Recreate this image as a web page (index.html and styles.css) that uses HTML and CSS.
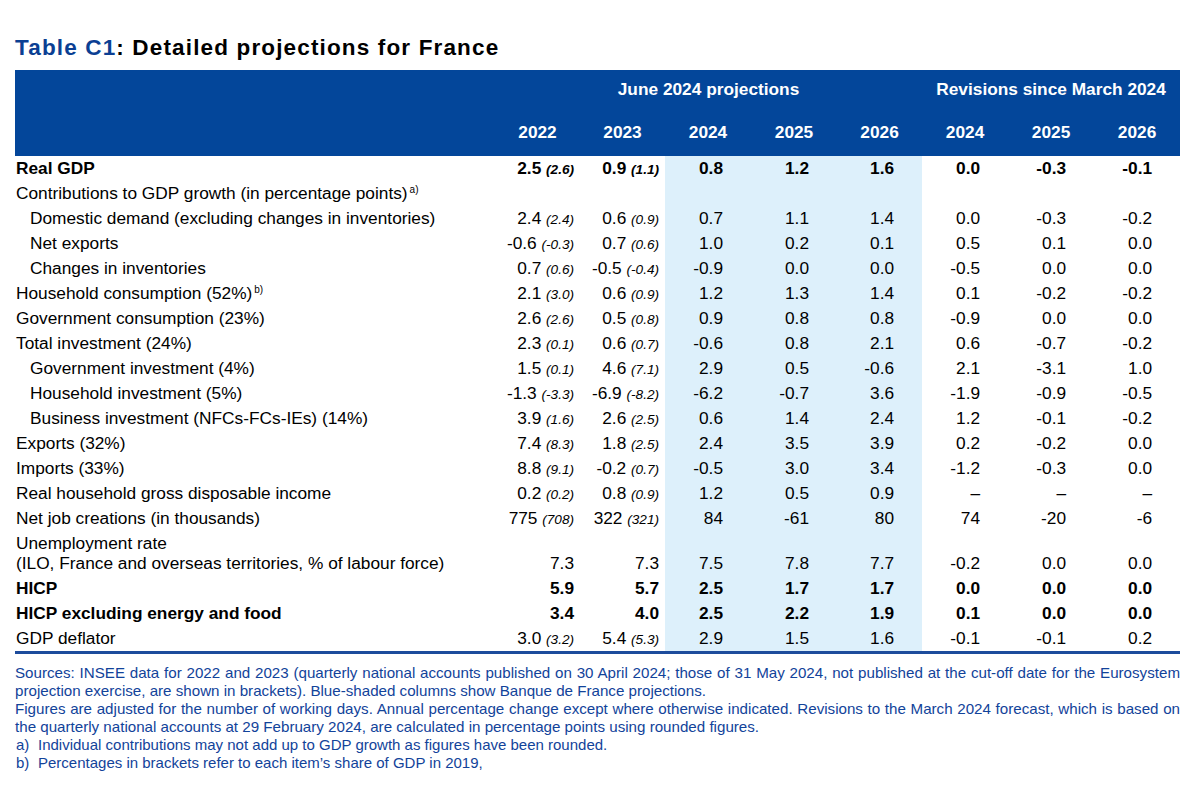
FILE: index.html
```html
<!DOCTYPE html>
<html lang="en">
<head>
<meta charset="utf-8">
<title>Table C1: Detailed projections for France</title>
<link rel="stylesheet" href="styles.css">
</head>
<body>
<main class="page">
  <h1 class="title"><span class="tnum">Table C1</span>: Detailed projections for France</h1>
  <table class="proj">
    <colgroup>
      <col class="c-label">
      <col class="c-hist"><col class="c-hist">
      <col class="c-proj"><col class="c-proj"><col class="c-proj3">
      <col class="c-rev"><col class="c-rev"><col class="c-rev">
    </colgroup>
    <thead>
      <tr class="grp">
        <th></th>
        <th colspan="5">June 2024 projections</th>
        <th colspan="3">Revisions since March 2024</th>
      </tr>
      <tr class="yrs">
        <th></th>
        <th>2022</th><th>2023</th><th>2024</th><th>2025</th><th>2026</th>
        <th>2024</th><th>2025</th><th>2026</th>
      </tr>
    </thead>
    <tbody>
      <tr class="b"><td>Real GDP</td><td class="h">2.5 <i>(2.6)</i></td><td class="h">0.9 <i>(1.1)</i></td><td>0.8</td><td>1.2</td><td>1.6</td><td>0.0</td><td>-0.3</td><td>-0.1</td></tr>
      <tr><td>Contributions to GDP growth (in percentage points)<sup>a)</sup></td><td class="h"></td><td class="h"></td><td></td><td></td><td></td><td></td><td></td><td></td></tr>
      <tr><td class="ind">Domestic demand (excluding changes in inventories)</td><td class="h">2.4 <i>(2.4)</i></td><td class="h">0.6 <i>(0.9)</i></td><td>0.7</td><td>1.1</td><td>1.4</td><td>0.0</td><td>-0.3</td><td>-0.2</td></tr>
      <tr><td class="ind">Net exports</td><td class="h">-0.6 <i>(-0.3)</i></td><td class="h">0.7 <i>(0.6)</i></td><td>1.0</td><td>0.2</td><td>0.1</td><td>0.5</td><td>0.1</td><td>0.0</td></tr>
      <tr><td class="ind">Changes in inventories</td><td class="h">0.7 <i>(0.6)</i></td><td class="h">-0.5 <i>(-0.4)</i></td><td>-0.9</td><td>0.0</td><td>0.0</td><td>-0.5</td><td>0.0</td><td>0.0</td></tr>
      <tr><td>Household consumption (52%)<sup>b)</sup></td><td class="h">2.1 <i>(3.0)</i></td><td class="h">0.6 <i>(0.9)</i></td><td>1.2</td><td>1.3</td><td>1.4</td><td>0.1</td><td>-0.2</td><td>-0.2</td></tr>
      <tr><td>Government consumption (23%)</td><td class="h">2.6 <i>(2.6)</i></td><td class="h">0.5 <i>(0.8)</i></td><td>0.9</td><td>0.8</td><td>0.8</td><td>-0.9</td><td>0.0</td><td>0.0</td></tr>
      <tr><td>Total investment (24%)</td><td class="h">2.3 <i>(0.1)</i></td><td class="h">0.6 <i>(0.7)</i></td><td>-0.6</td><td>0.8</td><td>2.1</td><td>0.6</td><td>-0.7</td><td>-0.2</td></tr>
      <tr><td class="ind">Government investment (4%)</td><td class="h">1.5 <i>(0.1)</i></td><td class="h">4.6 <i>(7.1)</i></td><td>2.9</td><td>0.5</td><td>-0.6</td><td>2.1</td><td>-3.1</td><td>1.0</td></tr>
      <tr><td class="ind">Household investment (5%)</td><td class="h">-1.3 <i>(-3.3)</i></td><td class="h">-6.9 <i>(-8.2)</i></td><td>-6.2</td><td>-0.7</td><td>3.6</td><td>-1.9</td><td>-0.9</td><td>-0.5</td></tr>
      <tr><td class="ind">Business investment (NFCs-FCs-IEs) (14%)</td><td class="h">3.9 <i>(1.6)</i></td><td class="h">2.6 <i>(2.5)</i></td><td>0.6</td><td>1.4</td><td>2.4</td><td>1.2</td><td>-0.1</td><td>-0.2</td></tr>
      <tr><td>Exports (32%)</td><td class="h">7.4 <i>(8.3)</i></td><td class="h">1.8 <i>(2.5)</i></td><td>2.4</td><td>3.5</td><td>3.9</td><td>0.2</td><td>-0.2</td><td>0.0</td></tr>
      <tr><td>Imports (33%)</td><td class="h">8.8 <i>(9.1)</i></td><td class="h">-0.2 <i>(0.7)</i></td><td>-0.5</td><td>3.0</td><td>3.4</td><td>-1.2</td><td>-0.3</td><td>0.0</td></tr>
      <tr><td>Real household gross disposable income</td><td class="h">0.2 <i>(0.2)</i></td><td class="h">0.8 <i>(0.9)</i></td><td>1.2</td><td>0.5</td><td>0.9</td><td>–</td><td>–</td><td>–</td></tr>
      <tr><td>Net job creations (in thousands)</td><td class="h">775 <i>(708)</i></td><td class="h">322 <i>(321)</i></td><td>84</td><td>-61</td><td>80</td><td>74</td><td>-20</td><td>-6</td></tr>
      <tr class="two"><td>Unemployment rate<br>(ILO, France and overseas territories, % of labour force)</td><td class="h">7.3</td><td class="h">7.3</td><td>7.5</td><td>7.8</td><td>7.7</td><td>-0.2</td><td>0.0</td><td>0.0</td></tr>
      <tr class="b"><td>HICP</td><td class="h">5.9</td><td class="h">5.7</td><td>2.5</td><td>1.7</td><td>1.7</td><td>0.0</td><td>0.0</td><td>0.0</td></tr>
      <tr class="b"><td>HICP excluding energy and food</td><td class="h">3.4</td><td class="h">4.0</td><td>2.5</td><td>2.2</td><td>1.9</td><td>0.1</td><td>0.0</td><td>0.0</td></tr>
      <tr class="last"><td>GDP deflator</td><td class="h">3.0 <i>(3.2)</i></td><td class="h">5.4 <i>(5.3)</i></td><td>2.9</td><td>1.5</td><td>1.6</td><td>-0.1</td><td>-0.1</td><td>0.2</td></tr>
    </tbody>
  </table>
  <div class="notes">
    <p class="para">Sources: INSEE data for 2022 and 2023 (quarterly national accounts published on 30 April 2024; those of 31 May 2024, not published at the cut-off date for the Eurosystem projection exercise, are shown in brackets). Blue-shaded columns show Banque de France projections.</p>
    <p class="para">Figures are adjusted for the number of working days. Annual percentage change except where otherwise indicated. Revisions to the March 2024 forecast, which is based on the quarterly national accounts at 29 February 2024, are calculated in percentage points using rounded figures.</p>
    <p class="fn"><span class="fl">a)</span><span>Individual contributions may not add up to GDP growth as figures have been rounded.</span></p>
    <p class="fn"><span class="fl">b)</span><span>Percentages in brackets refer to each item’s share of GDP in 2019,</span></p>
  </div>
</main>
</body>
</html>
```

FILE: styles.css
```css
html, body {
  margin: 0;
  padding: 0;
  background: #ffffff;
}

body {
  font-family: "Liberation Sans", Arial, Helvetica, sans-serif;
  color: #000000;
}

.page {
  width: 1165px;
  padding: 34px 0 0 15px;
}

.title {
  margin: 0 0 8px 0;
  font-size: 22.5px;
  line-height: 28px;
  font-weight: bold;
  letter-spacing: 1.15px;
  color: #000000;
}

.tnum {
  color: #0b3f93;
}

.proj {
  width: 1165px;
  border-collapse: collapse;
  table-layout: fixed;
  font-size: 17.3px;
}

.c-label { width: 480px; }
.c-hist { width: 85px; }
.c-proj { width: 86px; background: #ddf0fb; }
.c-proj3 { width: 85px; background: #ddf0fb; }
.c-rev { width: 86px; }

.proj thead th {
  background: #03469a;
  color: #ffffff;
  font-weight: bold;
  text-align: center;
  padding: 0;
  line-height: 20px;
}

.proj .grp th {
  height: 38px;
  vertical-align: middle;
}

.proj .yrs th {
  height: 48px;
  vertical-align: middle;
}

.proj tbody td {
  box-sizing: border-box;
  padding: 2px 28px 3px 0;
  line-height: 20px;
  height: 25px;
  text-align: right;
  vertical-align: bottom;
  white-space: nowrap;
}

.proj tbody td:first-child {
  text-align: left;
  padding-left: 1px;
  padding-right: 0;
}

.proj tbody td.ind {
  padding-left: 15px;
}

.proj tbody td.h {
  padding-right: 6px;
}

.proj tbody tr.two td {
  height: 45px;
}

.proj tbody tr.b td {
  font-weight: bold;
}

.proj tbody i {
  font-size: 13.6px;
  line-height: 14px;
  font-style: italic;
}

.proj tbody tr.last td {
  border-bottom: 3px solid #1d4c9c;
}

.proj sup {
  font-size: 10px;
  line-height: 0;
  vertical-align: 6px;
  margin-left: 2px;
}

.notes {
  margin-top: 10px;
  color: #12439a;
  font-size: 15px;
  line-height: 18px;
}

.notes p {
  margin: 0;
}

.notes .para {
  font-size: 15.15px;
  text-align: justify;
}

.notes .fn {
  display: flex;
  padding-left: 1px;
}

.notes .fl {
  width: 22px;
  flex: none;
}
```
